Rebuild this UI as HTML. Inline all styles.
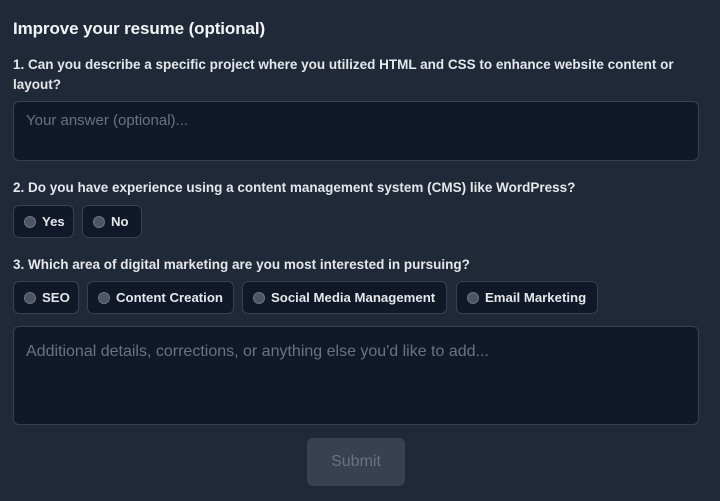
<!DOCTYPE html>
<html><head><style>
*{box-sizing:border-box;margin:0;padding:0}
body{width:720px;height:501px;background:#1f2937;font-family:"Liberation Sans",sans-serif;color:#e5e7eb;position:relative;overflow:hidden}
h1{position:absolute;left:13px;top:19px;font-size:17px;font-weight:bold;color:#f3f4f6;letter-spacing:-0.1px}
.q{position:absolute;left:13px;font-size:13.5px;font-weight:bold;line-height:20px;color:#e5e7eb;width:684px}
.ta{position:absolute;left:13px;width:686px;background:#111827;border:1px solid #374151;border-radius:6px;color:#6b7280;padding:10px 12px}
.p{position:absolute;height:33px;background:#111827;border:1px solid #374151;border-radius:6px;font-size:13.2px;font-weight:bold;color:#e5e7eb;display:flex;align-items:center;padding-left:10px;white-space:nowrap}
.p i{display:inline-block;width:12px;height:12px;border-radius:50%;background:#4b5563;border:1px solid #6b7280;margin-right:6px}
.btn{position:absolute;left:307px;top:438px;width:98px;height:48px;background:#374151;border-radius:6px;color:#6b7280;font-size:16px;display:flex;align-items:center;justify-content:center}
</style></head><body>
<h1>Improve your resume (optional)</h1>
<div class="q" style="top:55px">1. Can you describe a specific project where you utilized HTML and CSS to enhance website content or<br>layout?</div>
<div class="ta" style="top:101px;height:60px;font-size:15px">Your answer (optional)...</div>
<div class="q" style="top:178px">2. Do you have experience using a content management system (CMS) like WordPress?</div>
<div class="p" style="left:13px;top:205px;width:61px"><i></i>Yes</div>
<div class="p" style="left:82px;top:205px;width:60px"><i></i>No</div>
<div class="q" style="top:255px">3. Which area of digital marketing are you most interested in pursuing?</div>
<div class="p" style="left:13px;top:281px;width:66px"><i></i>SEO</div>
<div class="p" style="left:87px;top:281px;width:147px"><i></i>Content Creation</div>
<div class="p" style="left:242px;top:281px;width:205px"><i></i>Social Media Management</div>
<div class="p" style="left:456px;top:281px;width:142px"><i></i>Email Marketing</div>
<div class="ta" style="top:326px;height:99px;padding-top:16px;font-size:16px">Additional details, corrections, or anything else you'd like to add...</div>
<div class="btn">Submit</div>
</body></html>
